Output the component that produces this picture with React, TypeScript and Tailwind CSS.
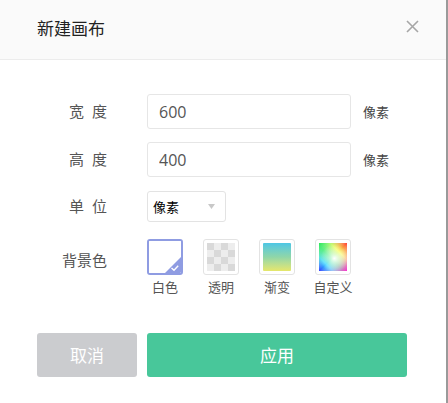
import { useState } from 'react'

const cjk = "font-['Microsoft_YaHei','Noto_Sans_CJK_SC',sans-serif]"

function Swatch({ label, selected, children, onClick }: { label: string; selected?: boolean; children: React.ReactNode; onClick: () => void }) {
  return (
    <button type="button" onClick={onClick} className="flex w-[36px] flex-col items-center">
      <div
        className={`relative h-[36px] w-[36px] overflow-hidden rounded-[3px] ${
          selected ? 'border-2 border-[#8f9ce2]' : 'border border-[#e3e3e3] p-[3px]'
        }`}
      >
        {children}
        {selected ? (
          <svg className="absolute bottom-0 right-0" width="16" height="16" viewBox="0 0 16 16">
            <path d="M16 0 L16 16 L0 16 Z" fill="#8f9ce2" />
            <path d="M6.5 11 L9 13.2 L13.2 8.8" fill="none" stroke="#fff" strokeWidth="1.4" />
          </svg>
        ) : null}
      </div>
      <span className="mt-[4px] whitespace-nowrap text-[13px] leading-[16px] text-[#555]">{label}</span>
    </button>
  )
}

export default function App() {
  const [width, setWidth] = useState('600')
  const [height, setHeight] = useState('400')
  const [bg, setBg] = useState('white')

  return (
    <div className={`h-[403px] w-[448px] border-r-2 border-[#9a9a9a] bg-white ${cjk}`}>
      <div className="flex h-[60px] items-center justify-between border-b border-[#ececec] bg-[#fafafa] pl-[37px] pr-[27px]">
        <span className="pb-[4px] text-[17px] text-[#222]">新建画布</span>
        <svg width="13" height="13" viewBox="0 0 13 13" className="mb-[7px]">
          <path d="M1 1 L12 12 M12 1 L1 12" stroke="#a6a6a6" strokeWidth="1.6" />
        </svg>
      </div>

      <div className="flex flex-col pl-[37px] pt-[34px]">
        <div className="flex h-[35px] items-center">
          <div className="flex w-[70px] justify-end gap-[8px] text-[15px] text-[#555]">
            <span>宽</span>
            <span>度</span>
          </div>
          <input
            value={width}
            onChange={(e) => setWidth(e.target.value)}
            className="ml-[40px] h-[35px] w-[204px] rounded-[3px] border border-[#e6e6e6] px-[11px] font-['Open_Sans',sans-serif] text-[16px] text-[#555] outline-none"
          />
          <span className="ml-[12px] text-[13px] text-[#444]">像素</span>
        </div>

        <div className="mt-[13px] flex h-[35px] items-center">
          <div className="flex w-[70px] justify-end gap-[8px] text-[15px] text-[#555]">
            <span>高</span>
            <span>度</span>
          </div>
          <input
            value={height}
            onChange={(e) => setHeight(e.target.value)}
            className="ml-[40px] h-[35px] w-[204px] rounded-[3px] border border-[#e6e6e6] px-[11px] font-['Open_Sans',sans-serif] text-[16px] text-[#555] outline-none"
          />
          <span className="ml-[12px] text-[13px] text-[#444]">像素</span>
        </div>

        <div className="mt-[14px] flex h-[31px] items-center">
          <div className="flex w-[70px] justify-end gap-[8px] text-[15px] text-[#555]">
            <span>单</span>
            <span>位</span>
          </div>
          <div className="ml-[40px] flex h-[31px] w-[79px] items-center justify-between rounded-[3px] border border-[#e3e3e3] pl-[5px] pr-[10px]">
            <span className="text-[13px] text-black">像素</span>
            <svg width="7" height="5" viewBox="0 0 7 5">
              <path d="M0 0 L7 0 L3.5 5 Z" fill="#c8c8c8" />
            </svg>
          </div>
        </div>

        <div className="mt-[17px] flex items-start">
          <div className="mt-[10px] w-[70px] text-right text-[15px] text-[#555]">背景色</div>
          <div className="ml-[40px] flex gap-[20px]">
            <Swatch label="白色" selected={bg === 'white'} onClick={() => setBg('white')}>
              <div className="h-full w-full bg-white" />
            </Swatch>
            <Swatch label="透明" selected={bg === 'clear'} onClick={() => setBg('clear')}>
              <svg width="28" height="28" viewBox="0 0 4 4" className="block" shapeRendering="crispEdges">
                <rect width="4" height="4" fill="#ededed" />
                <path d="M0 0h1v1H0z M2 0h1v1H2z M1 1h1v1H1z M3 1h1v1H3z M0 2h1v1H0z M2 2h1v1H2z M1 3h1v1H1z M3 3h1v1H3z" fill="#d9d9d9" />
              </svg>
            </Swatch>
            <Swatch label="渐变" selected={bg === 'gradient'} onClick={() => setBg('gradient')}>
              <div className="h-full w-full rounded-[1px] bg-linear-to-b from-[#4cc6e4] via-[#8fd6a8] to-[#e6e76a]" />
            </Swatch>
            <Swatch label="自定义" selected={bg === 'custom'} onClick={() => setBg('custom')}>
              <svg width="28" height="28" viewBox="0 0 28 28" className="block">
                <defs>
                  <linearGradient id="hue" x1="0" y1="1" x2="1" y2="0">
                    <stop offset="0" stopColor="#3a3cff" />
                    <stop offset="0.25" stopColor="#2bd6ff" />
                    <stop offset="0.45" stopColor="#25e86a" />
                    <stop offset="0.7" stopColor="#f6ff3a" />
                    <stop offset="1" stopColor="#ff3b3b" />
                  </linearGradient>
                  <linearGradient id="hue2" x1="0" y1="0" x2="1" y2="1">
                    <stop offset="0" stopColor="#28e858" stopOpacity="1" />
                    <stop offset="0.5" stopColor="#ffffff" stopOpacity="0" />
                    <stop offset="1" stopColor="#ff2ad0" stopOpacity="1" />
                  </linearGradient>
                  <radialGradient id="wh" cx="0.55" cy="0.55" r="0.5">
                    <stop offset="0" stopColor="#fff" stopOpacity="1" />
                    <stop offset="1" stopColor="#fff" stopOpacity="0" />
                  </radialGradient>
                </defs>
                <rect width="28" height="28" fill="url(#hue)" />
                <rect width="28" height="28" fill="url(#hue2)" />
                <rect width="28" height="28" fill="url(#wh)" />
              </svg>
            </Swatch>
          </div>
        </div>

        <div className="mt-[38px] flex gap-[10px]">
          <button type="button" className="h-[44px] w-[100px] rounded-[3px] bg-[#cbcccf] text-[17px] text-white">
            取消
          </button>
          <button type="button" className="h-[44px] w-[260px] rounded-[3px] bg-[#48c79a] text-[17px] text-white">
            应用
          </button>
        </div>
      </div>
    </div>
  )
}
